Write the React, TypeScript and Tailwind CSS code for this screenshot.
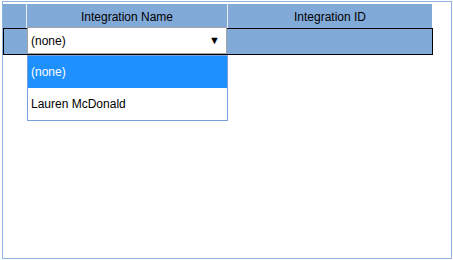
export default function App() {
  return (
    <div className="w-[453px] h-[260px] bg-white pt-[1px] pl-[2px] font-['Liberation_Sans',Tahoma,sans-serif] text-[12px] text-black">
      <div className="relative w-[450px] h-[258px] border border-[#8fb2e3] bg-white">
        {/* header */}
        <div className="flex mt-[1px] h-[25px] bg-[#82aad9] w-[429px] border-t border-white">
          <div className="w-[24px] border-r border-[#e8eef8]" />
          <div className="w-[201px] flex items-center justify-center pt-[1px] border-r border-[#e8eef8]">
            Integration Name
          </div>
          <div className="flex-1 flex items-center justify-center pt-[1px]">Integration ID</div>
        </div>

        {/* editing row */}
        <div className="flex h-[27px] w-[430px] border border-black bg-[#82aad9]">
          <div className="w-[23px]" />
          <div className="relative w-[200px] -mt-[2px] h-[27px] bg-white border border-[#a3a3a3] flex items-center justify-between pl-[3px] pr-[6px]">
            <span>(none)</span>
            <span className="text-[11px]">▼</span>
          </div>
          <div className="flex-1" />
        </div>

        {/* dropdown list */}
        <div className="absolute left-[24px] top-[53px] w-[201px] bg-white border border-[#7a9fd8]">
          <div className="h-[32px] flex items-center pl-[3px] bg-[#1e90ff] text-white">(none)</div>
          <div className="h-[32px] flex items-center pl-[3px]">Lauren McDonald</div>
        </div>
      </div>
    </div>
  )
}
